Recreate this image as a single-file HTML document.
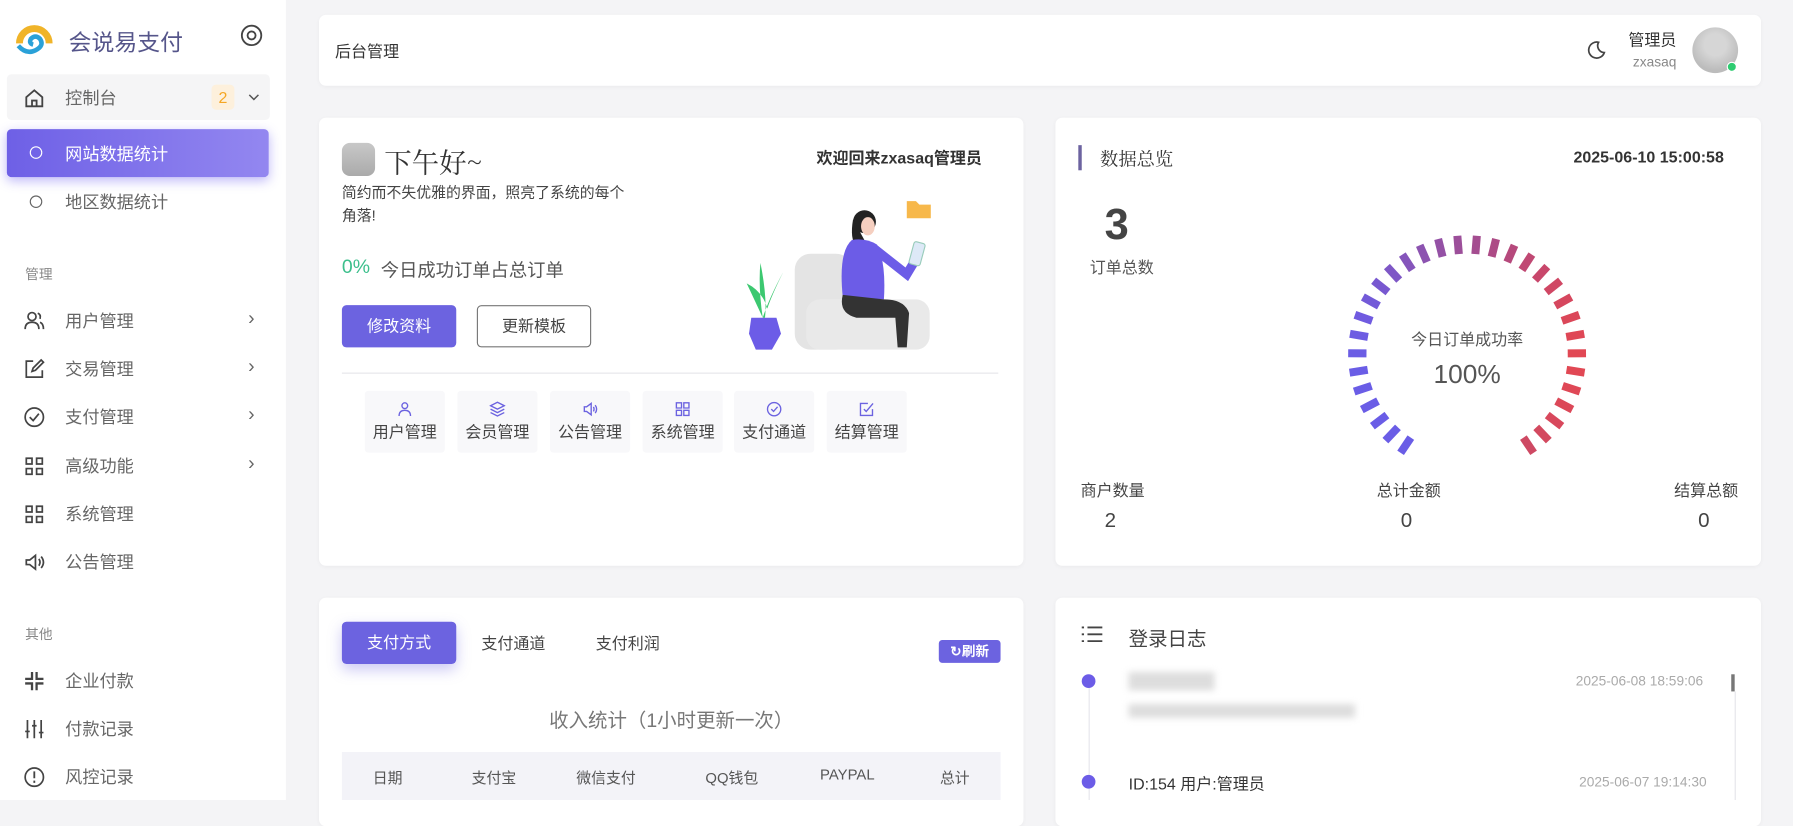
<!DOCTYPE html>
<html><head><meta charset="utf-8"><style>
*{margin:0;padding:0;box-sizing:border-box}
body{width:1793px;height:800px;overflow:hidden;background:#f4f4f6;font-family:"Liberation Sans","Noto Sans CJK SC",sans-serif;color:#333}
#s{position:absolute;left:0;top:0;width:1568px;height:700px;transform:scale(1.14349,1.14286);transform-origin:0 0}
.a{position:absolute;white-space:nowrap}
.side{position:absolute;left:0;top:0;width:250px;height:700px;background:#fff}
.card{position:absolute;background:#fff;border-radius:6px;box-shadow:0 1px 4px rgba(0,0,0,.04)}
.mi{position:absolute;left:20px;font-size:15px;color:#666;display:flex;align-items:center}
.mi svg{width:20px;height:20px;margin-right:17px}
.chev{position:absolute;left:217px;font-size:17px;color:#666}
.lbl{position:absolute;left:22px;font-size:12px;color:#888}
.tile{position:absolute;top:342px;width:70px;height:54px;background:#f8f8fa;border-radius:3px;text-align:center;font-size:14px;color:#444}
.tile svg{display:block;margin:9px auto 3px;width:14px;height:14px}
.th{position:absolute;top:670px;font-size:13px;color:#555;transform:translateX(-50%)}
</style></head><body><div id="s">
<div class="side">
 <svg class="a" style="left:13px;top:16px" width="34" height="34" viewBox="0 0 34 34"><path d="M4 22 A13 13 0 1 1 30 22" fill="none" stroke="#f0b429" stroke-width="6"/><path d="M3 24 Q10 32 18 28 Q26 24 22 18 Q18 14 14 18 Q12 22 16 23" fill="none" stroke="#2aa1d8" stroke-width="4"/></svg>
 <div class="a" style="left:60px;top:21px;font-size:20px;color:#55558a">会说易支付</div>
 <svg class="a" style="left:210px;top:21px" width="20" height="20" viewBox="0 0 20 20"><circle cx="10" cy="10" r="8.5" fill="none" stroke="#444" stroke-width="1.6"/><circle cx="10" cy="10" r="3.5" fill="none" stroke="#444" stroke-width="1.6"/></svg>
 <div class="a" style="left:6px;top:65px;width:230px;height:40px;background:#f5f5f6;border-radius:4px"></div>
 <div class="mi" style="top:75px"><svg viewBox="0 0 20 20"><path d="M3 9 L10 3 L17 9 V17 H3 Z M8 17 V12 H12 V17" fill="none" stroke="#444" stroke-width="1.6"/></svg>控制台</div>
 <div class="a" style="left:185px;top:74px;width:20px;height:22px;background:#fdf0dc;border-radius:4px;color:#f5a623;font-size:14px;text-align:center;line-height:22px">2</div>
 <svg class="a" style="left:217px;top:81px" width="10" height="8" viewBox="0 0 10 8"><path d="M1 2 L5 6 L9 2" fill="none" stroke="#555" stroke-width="1.3"/></svg>
 <div class="a" style="left:6px;top:113px;width:229px;height:42px;background:linear-gradient(90deg,#6e60e6,#9387f0);border-radius:4px;box-shadow:0 3px 10px rgba(115,103,240,.45)"></div>
 <div class="a" style="left:26px;top:128px;width:11px;height:11px;border:1.5px solid #fff;border-radius:50%"></div>
 <div class="a" style="left:57px;top:124px;font-size:15px;color:#fff">网站数据统计</div>
 <div class="a" style="left:26px;top:171px;width:11px;height:11px;border:1.5px solid #666;border-radius:50%"></div>
 <div class="a" style="left:57px;top:166px;font-size:15px;color:#666">地区数据统计</div>
 <div class="lbl" style="top:231px">管理</div>
 <div class="mi" style="top:270px"><svg viewBox="0 0 20 20"><circle cx="8" cy="6" r="3.5" fill="none" stroke="#444" stroke-width="1.5"/><path d="M2 17 Q2 11 8 11 Q14 11 14 17 M13 3 Q16 4 15 8 M15 11 Q18 12 18 17" fill="none" stroke="#444" stroke-width="1.5"/></svg>用户管理</div><div class="chev" style="top:269px">›</div>
 <div class="mi" style="top:312px"><svg viewBox="0 0 20 20"><path d="M9 3 H3 V17 H17 V11 M8 12 L9 9 L16 2 L18 4 L11 11 Z" fill="none" stroke="#444" stroke-width="1.5"/></svg>交易管理</div><div class="chev" style="top:311px">›</div>
 <div class="mi" style="top:354px"><svg viewBox="0 0 20 20"><circle cx="10" cy="10" r="8" fill="none" stroke="#444" stroke-width="1.5"/><path d="M6 10 L9 13 L14 7" fill="none" stroke="#444" stroke-width="1.5"/></svg>支付管理</div><div class="chev" style="top:353px">›</div>
 <div class="mi" style="top:397px"><svg viewBox="0 0 20 20"><path d="M3 3h5v5H3zM12 3h5v5h-5zM3 12h5v5H3zM12 12h5v5h-5z" fill="none" stroke="#444" stroke-width="1.5"/></svg>高级功能</div><div class="chev" style="top:396px">›</div>
 <div class="mi" style="top:439px"><svg viewBox="0 0 20 20"><path d="M3 3h5v5H3zM12 3h5v5h-5zM3 12h5v5H3zM12 12h5v5h-5z" fill="none" stroke="#444" stroke-width="1.5"/></svg>系统管理</div>
 <div class="mi" style="top:481px"><svg viewBox="0 0 20 20"><path d="M3 8h3l5-4v12l-5-4H3z M14 7 Q16 10 14 13 M16 5 Q20 10 16 15" fill="none" stroke="#444" stroke-width="1.5"/></svg>公告管理</div>
 <div class="lbl" style="top:546px">其他</div>
 <div class="mi" style="top:585px"><svg viewBox="0 0 20 20"><path d="M8 2v6H2M12 2v6h6M8 18v-6H2M12 18v-6h6" fill="none" stroke="#444" stroke-width="2"/></svg>企业付款</div>
 <div class="mi" style="top:627px"><svg viewBox="0 0 20 20"><path d="M4 2v16M10 2v16M16 2v16M2 12h4M8 7h4M14 13h4" fill="none" stroke="#444" stroke-width="1.5"/></svg>付款记录</div>
 <div class="mi" style="top:669px"><svg viewBox="0 0 20 20"><circle cx="10" cy="10" r="8" fill="none" stroke="#444" stroke-width="1.5"/><path d="M10 5v6M10 13v2" stroke="#444" stroke-width="1.6"/></svg>风控记录</div>
</div>

<div class="card" style="left:279px;top:13px;width:1261px;height:62px"></div>
<div class="a" style="left:293px;top:35px;font-size:14px;color:#333">后台管理</div>
<svg class="a" style="left:1387px;top:35px" width="18" height="18" viewBox="0 0 18 18"><path d="M11 2 A7 7 0 1 0 16 11 A6 6 0 0 1 11 2Z" fill="none" stroke="#444" stroke-width="1.5"/></svg>
<div class="a" style="left:1424px;top:25px;font-size:14px;color:#333">管理员</div>
<div class="a" style="left:1428px;top:47px;font-size:12px;color:#888">zxasaq</div>
<div class="a" style="left:1480px;top:24px;width:40px;height:40px;border-radius:50%;background:radial-gradient(circle at 50% 38%,#d6d6d6 30%,#bcbcbc 70%)"></div>
<div class="a" style="left:1510px;top:54px;width:9px;height:9px;border-radius:50%;background:#2ecc71;border:1.5px solid #fff"></div>

<div class="card" style="left:279px;top:103px;width:616px;height:392px"></div>
<div class="a" style="left:299px;top:125px;width:29px;height:29px;border-radius:7px;background:linear-gradient(#c8c8c8,#aaa)"></div>
<div class="a" style="left:336px;top:123px;font-size:24px;color:#333;font-family:'Noto Serif CJK SC',serif">下午好~</div>
<div class="a" style="left:714px;top:128px;font-size:14px;color:#333;font-weight:bold">欢迎回来zxasaq管理员</div>
<div class="a" style="left:299px;top:159px;font-size:13px;color:#444;line-height:20px">简约而不失优雅的界面，照亮了系统的每个<br>角落!</div>
<div class="a" style="left:299px;top:224px;font-size:17px;color:#3cbf8c">0%</div>
<div class="a" style="left:333px;top:223px;font-size:16px;color:#555">今日成功订单占总订单</div>
<div class="a" style="left:299px;top:267px;width:100px;height:37px;background:#6c63e0;border-radius:4px;color:#fff;font-size:14px;text-align:center;line-height:37px">修改资料</div>
<div class="a" style="left:417px;top:267px;width:100px;height:37px;border:1px solid #777;border-radius:4px;color:#444;font-size:14px;text-align:center;line-height:35px">更新模板</div>
<svg class="a" style="left:645px;top:170px" width="175" height="136" viewBox="0 0 175 136">
 <rect x="50" y="52" width="50" height="84" rx="14" fill="#e4e4e4"/><rect x="60" y="92" width="108" height="44" rx="12" fill="#e9e9e9"/>
 <path d="M8 78 Q16 95 22 108 Q28 90 40 68 Q30 88 26 100 Q22 85 8 78Z M22 108 Q18 80 20 60 Q26 90 24 108" fill="#3cc870"/>
 <path d="M12 108 H34 L38 122 L30 136 H16 L10 122Z" fill="#6c5ce7"/>
 <circle cx="111" cy="24" r="10" fill="#222"/><path d="M101 22 Q98 40 104 45 L112 42 Z" fill="#222"/><ellipse cx="114" cy="28" rx="6" ry="8" fill="#f5cfc0"/>
 <path d="M100 40 Q88 50 92 90 L128 92 Q130 60 122 44 Q112 38 100 40Z" fill="#6c5ce7"/>
 <path d="M92 88 Q88 104 104 108 L138 108 L140 134 L148 134 L150 104 Q146 92 128 92Z" fill="#333"/>
 <path d="M120 48 L148 70 L154 60" fill="none" stroke="#6c5ce7" stroke-width="8" stroke-linecap="round"/>
 <rect x="152" y="42" width="10" height="20" rx="2" fill="#dde9f7" stroke="#9cb" transform="rotate(15 157 52)"/>
 <path d="M148 6 h8 l3 3 h10 v12 h-21z" fill="#f7b84b"/>
</svg>
<div class="a" style="left:299px;top:326px;width:574px;height:1px;background:#e6e6ea"></div>
<div class="tile" style="left:319px"><svg viewBox="0 0 14 14"><circle cx="7" cy="4" r="2.5" fill="none" stroke="#6c63e0" stroke-width="1.2"/><path d="M2 13 Q2 8 7 8 Q12 8 12 13" fill="none" stroke="#6c63e0" stroke-width="1.2"/></svg>用户管理</div>
<div class="tile" style="left:400px"><svg viewBox="0 0 14 14"><path d="M7 1 L13 4 L7 7 L1 4Z M1 7 L7 10 L13 7 M1 10 L7 13 L13 10" fill="none" stroke="#6c63e0" stroke-width="1.2"/></svg>会员管理</div>
<div class="tile" style="left:481px"><svg viewBox="0 0 14 14"><path d="M2 5h2l4-3v10l-4-3H2z M10 5 Q11 7 10 9 M11.5 3.5 Q14 7 11.5 10.5" fill="none" stroke="#6c63e0" stroke-width="1.2"/></svg>公告管理</div>
<div class="tile" style="left:562px"><svg viewBox="0 0 14 14"><path d="M1.5 1.5h4.5v4.5H1.5zM8 1.5h4.5v4.5H8zM1.5 8h4.5v4.5H1.5zM8 8h4.5v4.5H8z" fill="none" stroke="#6c63e0" stroke-width="1.2"/></svg>系统管理</div>
<div class="tile" style="left:642px"><svg viewBox="0 0 14 14"><circle cx="7" cy="7" r="5.8" fill="none" stroke="#6c63e0" stroke-width="1.2"/><path d="M4.5 7 L6.5 9 L10 5" fill="none" stroke="#6c63e0" stroke-width="1.2"/></svg>支付通道</div>
<div class="tile" style="left:723px"><svg viewBox="0 0 14 14"><path d="M12 7v5.5H1.5V2H8 M4.5 7 L6.5 9 L12.5 2" fill="none" stroke="#6c63e0" stroke-width="1.2"/></svg>结算管理</div>

<div class="card" style="left:923px;top:103px;width:617px;height:392px"></div>
<div class="a" style="left:943px;top:127px;width:3px;height:22px;background:#6c63a0"></div>
<div class="a" style="left:962px;top:127px;font-size:16px;color:#333;font-family:'Noto Serif CJK SC',serif">数据总览</div>
<div class="a" style="left:1376px;top:129px;font-size:14px;color:#333;font-weight:bold">2025-06-10 15:00:58</div>
<div class="a" style="left:966px;top:176px;font-size:38px;color:#444;font-weight:bold">3</div>
<div class="a" style="left:953px;top:224px;font-size:14px;color:#555">订单总数</div>
<svg class="a" style="left:1173px;top:200px" width="220" height="200" viewBox="-110 -110 220 200">
<g>
<rect x="-3.5" y="-104" width="7" height="16" fill="#6a5de6" transform="rotate(-146)"/>
<rect x="-3.5" y="-104" width="7" height="16" fill="#6a5de6" transform="rotate(-136.6)"/>
<rect x="-3.5" y="-104" width="7" height="16" fill="#6a5de6" transform="rotate(-127.2)"/>
<rect x="-3.5" y="-104" width="7" height="16" fill="#6a5de6" transform="rotate(-117.7)"/>
<rect x="-3.5" y="-104" width="7" height="16" fill="#6a5de6" transform="rotate(-108.3)"/>
<rect x="-3.5" y="-104" width="7" height="16" fill="#6a5de6" transform="rotate(-98.9)"/>
<rect x="-3.5" y="-104" width="7" height="16" fill="#6b5de4" transform="rotate(-89.5)"/>
<rect x="-3.5" y="-104" width="7" height="16" fill="#6d5ce2" transform="rotate(-80.1)"/>
<rect x="-3.5" y="-104" width="7" height="16" fill="#705be0" transform="rotate(-70.6)"/>
<rect x="-3.5" y="-104" width="7" height="16" fill="#735ad8" transform="rotate(-61.2)"/>
<rect x="-3.5" y="-104" width="7" height="16" fill="#7858d0" transform="rotate(-51.8)"/>
<rect x="-3.5" y="-104" width="7" height="16" fill="#7e57c6" transform="rotate(-42.4)"/>
<rect x="-3.5" y="-104" width="7" height="16" fill="#8555bb" transform="rotate(-33)"/>
<rect x="-3.5" y="-104" width="7" height="16" fill="#8c53b0" transform="rotate(-23.5)"/>
<rect x="-3.5" y="-104" width="7" height="16" fill="#9451a5" transform="rotate(-14.1)"/>
<rect x="-3.5" y="-104" width="7" height="16" fill="#9c4f9a" transform="rotate(-4.7)"/>
<rect x="-3.5" y="-104" width="7" height="16" fill="#a44d90" transform="rotate(4.7)"/>
<rect x="-3.5" y="-104" width="7" height="16" fill="#ad4b86" transform="rotate(14.1)"/>
<rect x="-3.5" y="-104" width="7" height="16" fill="#b6497c" transform="rotate(23.5)"/>
<rect x="-3.5" y="-104" width="7" height="16" fill="#c04873" transform="rotate(33)"/>
<rect x="-3.5" y="-104" width="7" height="16" fill="#c8476b" transform="rotate(42.4)"/>
<rect x="-3.5" y="-104" width="7" height="16" fill="#d04764" transform="rotate(51.8)"/>
<rect x="-3.5" y="-104" width="7" height="16" fill="#d6475e" transform="rotate(61.2)"/>
<rect x="-3.5" y="-104" width="7" height="16" fill="#db4759" transform="rotate(70.6)"/>
<rect x="-3.5" y="-104" width="7" height="16" fill="#df4756" transform="rotate(80.1)"/>
<rect x="-3.5" y="-104" width="7" height="16" fill="#e14854" transform="rotate(89.5)"/>
<rect x="-3.5" y="-104" width="7" height="16" fill="#e14854" transform="rotate(98.9)"/>
<rect x="-3.5" y="-104" width="7" height="16" fill="#df4856" transform="rotate(108.3)"/>
<rect x="-3.5" y="-104" width="7" height="16" fill="#dc4858" transform="rotate(117.7)"/>
<rect x="-3.5" y="-104" width="7" height="16" fill="#d8485c" transform="rotate(127.2)"/>
<rect x="-3.5" y="-104" width="7" height="16" fill="#d3495f" transform="rotate(136.6)"/>
<rect x="-3.5" y="-104" width="7" height="16" fill="#ce4963" transform="rotate(146)"/>
</g></svg>
<div class="a" style="left:1183px;top:287px;width:200px;text-align:center;font-size:14px;color:#555">今日订单成功率</div>
<div class="a" style="left:1183px;top:314px;width:200px;text-align:center;font-size:23px;color:#555">100%</div>
<div class="a" style="left:945px;top:419px;font-size:14px;color:#444">商户数量</div>
<div class="a" style="left:966px;top:445px;font-size:18px;color:#444">2</div>
<div class="a" style="left:1204px;top:419px;font-size:14px;color:#444">总计金额</div>
<div class="a" style="left:1225px;top:445px;font-size:18px;color:#444">0</div>
<div class="a" style="left:1464px;top:419px;font-size:14px;color:#444">结算总额</div>
<div class="a" style="left:1485px;top:445px;font-size:18px;color:#444">0</div>

<div class="card" style="left:279px;top:523px;width:616px;height:200px"></div>
<div class="a" style="left:299px;top:544px;width:100px;height:37px;background:#6c63e0;border-radius:4px;color:#fff;font-size:14px;text-align:center;line-height:37px;box-shadow:0 5px 12px rgba(108,99,224,.35)">支付方式</div>
<div class="a" style="left:421px;top:553px;font-size:14px;color:#444">支付通道</div>
<div class="a" style="left:521px;top:553px;font-size:14px;color:#444">支付利润</div>
<div class="a" style="left:821px;top:560px;width:54px;height:20px;background:#6c63e0;border-radius:3px;color:#fff;font-size:12px;font-weight:bold;text-align:center;line-height:20px">↻刷新</div>
<div class="a" style="left:299px;top:616px;width:576px;text-align:center;font-size:17px;color:#777">收入统计（1小时更新一次）</div>
<div class="a" style="left:299px;top:658px;width:576px;height:42px;background:#f3f3f8"></div>
<div class="th" style="left:339px">日期</div><div class="th" style="left:432px">支付宝</div><div class="th" style="left:530px">微信支付</div><div class="th" style="left:640px">QQ钱包</div><div class="th" style="left:741px">PAYPAL</div><div class="th" style="left:835px">总计</div>

<div class="card" style="left:923px;top:523px;width:617px;height:200px"></div>
<svg class="a" style="left:945px;top:546px" width="20" height="18" viewBox="0 0 20 18"><path d="M1 3h2M1 9h2M1 15h2M6 3h13M6 9h13M6 15h13" stroke="#444" stroke-width="1.6"/></svg>
<div class="a" style="left:987px;top:545px;font-size:17px;color:#444">登录日志</div>
<div class="a" style="left:952px;top:596px;width:1px;height:104px;background:#e6e6ec"></div>
<div class="a" style="left:946px;top:590px;width:12px;height:12px;border-radius:50%;background:#6c5ce7"></div>
<div class="a" style="left:946px;top:678px;width:12px;height:12px;border-radius:50%;background:#6c5ce7"></div>
<div class="a" style="left:987px;top:588px;width:75px;height:16px;background:#ddd;filter:blur(3px)"></div>
<div class="a" style="left:987px;top:616px;width:198px;height:12px;background:#ddd;filter:blur(3px)"></div>
<div class="a" style="left:1378px;top:589px;font-size:12px;color:#aaa">2025-06-08 18:59:06</div>
<div class="a" style="left:1514px;top:590px;width:3px;height:15px;background:#777"></div>
<div class="a" style="left:1517px;top:605px;width:1px;height:95px;background:#e6e6ea"></div>
<div class="a" style="left:987px;top:676px;font-size:14px;color:#333">ID:154 用户:管理员</div>
<div class="a" style="left:1381px;top:677px;font-size:12px;color:#aaa">2025-06-07 19:14:30</div>
</div></body></html>
